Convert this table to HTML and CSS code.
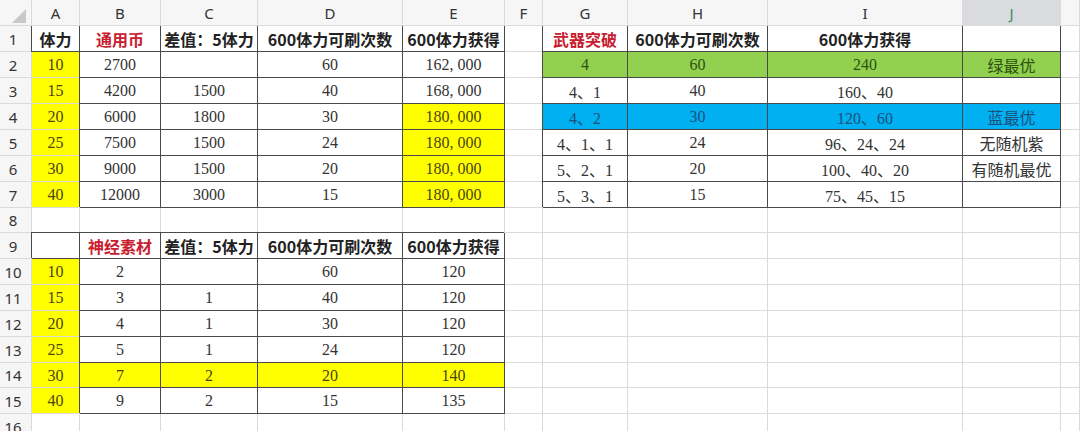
FILE: index.html
```html
<!DOCTYPE html>
<html lang="zh-CN">
<head>
<meta charset="utf-8">
<title>Sheet</title>
<link rel="stylesheet" href="styles.css">
</head>
<body>
<div class="sheet">
  <!-- header row -->
  <div class="corner"><span class="tri"></span></div>
  <div class="ch">A</div><div class="ch">B</div><div class="ch">C</div><div class="ch">D</div><div class="ch">E</div><div class="ch">F</div><div class="ch">G</div><div class="ch">H</div><div class="ch">I</div><div class="ch sel">J</div><div class="ch"></div>

  <!-- row 1 -->
  <div class="rh">1</div>
  <div class="c bt h">体力</div><div class="c bt h r">通用币</div><div class="c bt h">差值：5体力</div><div class="c bt h">600体力可刷次数</div><div class="c bt h">600体力获得</div><div class="c"></div>
  <div class="c bt h r">武器突破</div><div class="c bt h">600体力可刷次数</div><div class="c bt h">600体力获得</div><div class="c bt"></div><div class="c"></div>

  <!-- row 2 -->
  <div class="rh">2</div>
  <div class="c y">10</div><div class="c b">2700</div><div class="c b"></div><div class="c b">60</div><div class="c b">162<span class="cm">,</span>000</div><div class="c"></div>
  <div class="c b g">4</div><div class="c b g">60</div><div class="c b g">240</div><div class="c b g">绿最优</div><div class="c"></div>

  <!-- row 3 -->
  <div class="rh">3</div>
  <div class="c y">15</div><div class="c b">4200</div><div class="c b">1500</div><div class="c b">40</div><div class="c b">168<span class="cm">,</span>000</div><div class="c"></div>
  <div class="c b">4、1</div><div class="c b">40</div><div class="c b">160、40</div><div class="c b"></div><div class="c"></div>

  <!-- row 4 -->
  <div class="rh">4</div>
  <div class="c y">20</div><div class="c b">6000</div><div class="c b">1800</div><div class="c b">30</div><div class="c b y">180<span class="cm">,</span>000</div><div class="c"></div>
  <div class="c b bl">4、2</div><div class="c b bl">30</div><div class="c b bl">120、60</div><div class="c b bl">蓝最优</div><div class="c"></div>

  <!-- row 5 -->
  <div class="rh">5</div>
  <div class="c y">25</div><div class="c b">7500</div><div class="c b">1500</div><div class="c b">24</div><div class="c b y">180<span class="cm">,</span>000</div><div class="c"></div>
  <div class="c b">4、1、1</div><div class="c b">24</div><div class="c b">96、24、24</div><div class="c b">无随机紫</div><div class="c"></div>

  <!-- row 6 -->
  <div class="rh">6</div>
  <div class="c y">30</div><div class="c b">9000</div><div class="c b">1500</div><div class="c b">20</div><div class="c b y">180<span class="cm">,</span>000</div><div class="c"></div>
  <div class="c b">5、2、1</div><div class="c b">20</div><div class="c b">100、40、20</div><div class="c b">有随机最优</div><div class="c"></div>

  <!-- row 7 -->
  <div class="rh">7</div>
  <div class="c y">40</div><div class="c b">12000</div><div class="c b">3000</div><div class="c b">15</div><div class="c b y">180<span class="cm">,</span>000</div><div class="c"></div>
  <div class="c b">5、3、1</div><div class="c b">15</div><div class="c b">75、45、15</div><div class="c b"></div><div class="c"></div>

  <!-- row 8 -->
  <div class="rh">8</div>
  <div class="c"></div><div class="c"></div><div class="c"></div><div class="c"></div><div class="c"></div><div class="c"></div>
  <div class="c"></div><div class="c"></div><div class="c"></div><div class="c"></div><div class="c"></div>

  <!-- row 9 -->
  <div class="rh">9</div>
  <div class="c b"></div><div class="c b h r">神经素材</div><div class="c b h">差值：5体力</div><div class="c b h">600体力可刷次数</div><div class="c b h">600体力获得</div><div class="c"></div>
  <div class="c"></div><div class="c"></div><div class="c"></div><div class="c"></div><div class="c"></div>

  <!-- row 10 -->
  <div class="rh">10</div>
  <div class="c y">10</div><div class="c b">2</div><div class="c b"></div><div class="c b">60</div><div class="c b">120</div><div class="c"></div>
  <div class="c"></div><div class="c"></div><div class="c"></div><div class="c"></div><div class="c"></div>

  <!-- row 11 -->
  <div class="rh">11</div>
  <div class="c y">15</div><div class="c b">3</div><div class="c b">1</div><div class="c b">40</div><div class="c b">120</div><div class="c"></div>
  <div class="c"></div><div class="c"></div><div class="c"></div><div class="c"></div><div class="c"></div>

  <!-- row 12 -->
  <div class="rh">12</div>
  <div class="c y">20</div><div class="c b">4</div><div class="c b">1</div><div class="c b">30</div><div class="c b">120</div><div class="c"></div>
  <div class="c"></div><div class="c"></div><div class="c"></div><div class="c"></div><div class="c"></div>

  <!-- row 13 -->
  <div class="rh">13</div>
  <div class="c y">25</div><div class="c b">5</div><div class="c b">1</div><div class="c b">24</div><div class="c b">120</div><div class="c"></div>
  <div class="c"></div><div class="c"></div><div class="c"></div><div class="c"></div><div class="c"></div>

  <!-- row 14 -->
  <div class="rh">14</div>
  <div class="c y">30</div><div class="c b y">7</div><div class="c b y">2</div><div class="c b y">20</div><div class="c b y">140</div><div class="c"></div>
  <div class="c"></div><div class="c"></div><div class="c"></div><div class="c"></div><div class="c"></div>

  <!-- row 15 -->
  <div class="rh">15</div>
  <div class="c y">40</div><div class="c b">9</div><div class="c b">2</div><div class="c b">15</div><div class="c b">135</div><div class="c"></div>
  <div class="c"></div><div class="c"></div><div class="c"></div><div class="c"></div><div class="c"></div>

  <!-- row 16 -->
  <div class="rh">16</div>
  <div class="c"></div><div class="c"></div><div class="c"></div><div class="c"></div><div class="c"></div><div class="c"></div>
  <div class="c"></div><div class="c"></div><div class="c"></div><div class="c"></div><div class="c"></div>
</div>
</body>
</html>
```

FILE: styles.css
```css
* { box-sizing: border-box; }
html, body { margin: 0; padding: 0; background: #ffffff; }
body { width: 1080px; height: 431px; overflow: hidden; }

.sheet {
  display: grid;
  grid-template-columns: 32px 48px 81px 97px 145px 102px 38px 85px 140px 195px 98px 19px;
  grid-template-rows: 26px repeat(7, 26px) 25px repeat(5, 26px) 25px 26px 26px;
}

.corner {
  background: #f6f6f6;
  border-right: 1px solid #dadada;
  border-bottom: 1px solid #dadada;
  display: flex;
  justify-content: flex-end;
  align-items: flex-end;
  padding: 0 5px 2px 0;
}
.tri {
  width: 0;
  height: 0;
  border-left: 14px solid transparent;
  border-bottom: 14px solid #c8c8c8;
}

.ch, .rh {
  background: #f6f6f6;
  border-right: 1px solid #dadada;
  border-bottom: 1px solid #dadada;
  display: flex;
  align-items: center;
  justify-content: center;
  font-family: "Noto Sans", "Liberation Sans", sans-serif;
  font-size: 15px;
  color: #333333;
}
.rh { padding-right: 5px; }
.ch.sel { background: #d9dbdf; color: #3f8f6a; }

.c {
  border-right: 1px solid #dadada;
  border-bottom: 1px solid #dadada;
  display: flex;
  align-items: center;
  justify-content: center;
  white-space: nowrap;
  overflow: visible;
  font-family: "Liberation Serif", "Noto Sans CJK SC", serif;
  font-size: 16px;
  color: #333333;
  padding-top: 1px;
}
.cm { margin-right: 4px; }

.b {
  border-right-color: #4a4a4a;
  border-bottom-color: #4a4a4a;
  box-shadow: -1px -1px 0 #4a4a4a;
}
.bt {
  border-right-color: #4a4a4a;
  border-bottom-color: #4a4a4a;
  box-shadow: -1px 0 0 #4a4a4a;
}

.h {
  font-family: "Noto Sans CJK SC", sans-serif;
  font-weight: 700;
  color: #222222;
  font-size: 16px;
  padding-top: 0;
}
.r { color: #c8202f; }

.y { background: #ffff00; color: #4d4410; }
.g { background: #92d050; color: #2c5210; }
.bl { background: #00b0f0; color: #1d4f7c; }
```
